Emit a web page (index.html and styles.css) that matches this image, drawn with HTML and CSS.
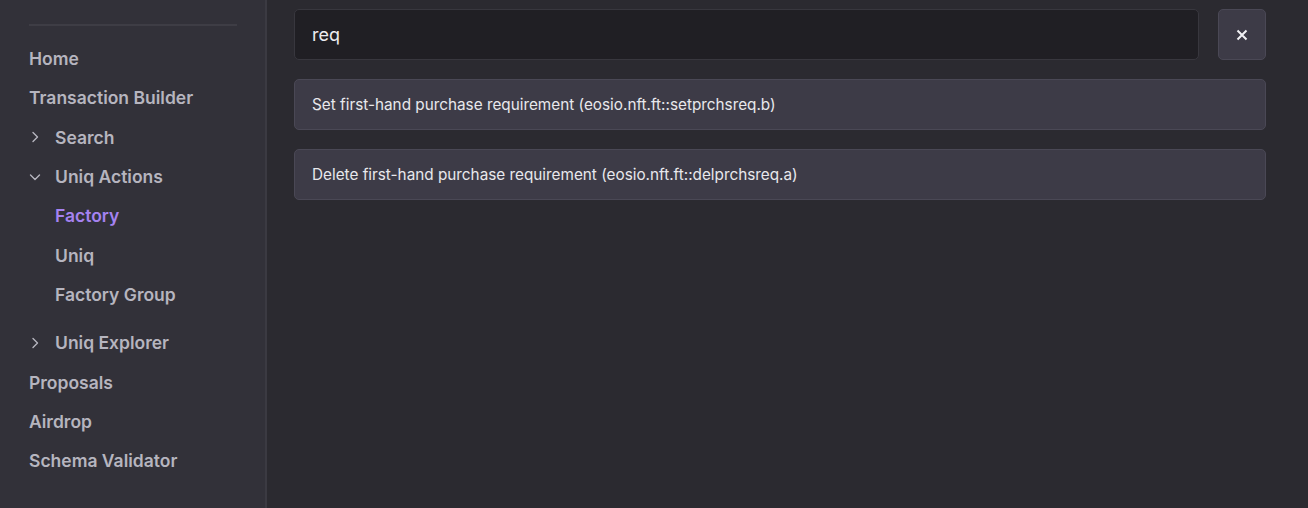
FILE: index.html
```html
<!DOCTYPE html>
<html>
<head>
<meta charset="utf-8">
<link rel="stylesheet" href="styles.css">
</head>
<body>
<div class="app">
  <aside class="sidebar">
    <div class="divider"></div>
    <nav class="nav">
      <a class="item">Home</a>
      <a class="item">Transaction Builder</a>
      <a class="item group"><svg class="chev" viewBox="0 0 12 12"><path d="M4 1.5 L8.5 6 L4 10.5"/></svg><span>Search</span></a>
      <a class="item group"><svg class="chev" viewBox="0 0 12 12"><path d="M1.5 4 L6 8.5 L10.5 4"/></svg><span>Uniq Actions</span></a>
      <div class="sub">
        <a class="item active">Factory</a>
        <a class="item">Uniq</a>
        <a class="item">Factory Group</a>
      </div>
      <a class="item group"><svg class="chev" viewBox="0 0 12 12"><path d="M4 1.5 L8.5 6 L4 10.5"/></svg><span>Uniq Explorer</span></a>
      <a class="item">Proposals</a>
      <a class="item">Airdrop</a>
      <a class="item">Schema Validator</a>
    </nav>
  </aside>
  <main class="main">
    <div class="search-row">
      <div class="search">req</div>
      <button class="clear"><svg viewBox="0 0 14 14"><path d="M2.5 2.5 L11.5 11.5 M11.5 2.5 L2.5 11.5"/></svg></button>
    </div>
    <div class="result">Set first-hand purchase requirement (eosio.nft.ft::setprchsreq.b)</div>
    <div class="result">Delete first-hand purchase requirement (eosio.nft.ft::delprchsreq.a)</div>
  </main>
</div>
</body>
</html>
```

FILE: styles.css
```css
* { box-sizing: border-box; }
html, body { margin: 0; padding: 0; }
body {
  width: 1308px;
  height: 508px;
  overflow: hidden;
  background: #2b2a30;
  font-family: Inter, "Noto Sans", sans-serif;
}
.app {
  display: flex;
  height: 508px;
}
.sidebar {
  width: 267px;
  flex: none;
  background: #323139;
  border-right: 2px solid #3b3a42;
  padding: 24px 28px 0 29px;
}
.divider {
  height: 2px;
  background: #3e3d45;
}
.nav {
  display: flex;
  flex-direction: column;
  padding-top: 13px;
}
.item {
  display: flex;
  align-items: center;
  height: 39.3px;
  color: #b6b5bf;
  font-size: 17.5px;
  font-weight: 600;
  text-decoration: none;
  white-space: nowrap;
}
.group .chev {
  width: 12px;
  height: 12px;
  margin-right: 14px;
  fill: none;
  stroke: #b6b5bf;
  stroke-width: 1.4;
  stroke-linecap: round;
  stroke-linejoin: round;
}
.sub {
  padding-left: 26px;
  margin-bottom: 9px;
}
.item.active { color: #a582f0; }
.main {
  flex: 1;
  padding: 9px 42px 0 27px;
}
.search-row {
  display: flex;
  gap: 19px;
  margin-bottom: 19px;
}
.search {
  flex: 1;
  height: 51px;
  background: #201f24;
  border: 1px solid #38373e;
  border-radius: 5px;
  color: #ececf0;
  font-size: 18px;
  display: flex;
  align-items: center;
  padding-left: 17px;
}
.clear {
  width: 48px;
  height: 51px;
  background: #3d3b47;
  border: 1px solid #4a4855;
  border-radius: 5px;
  display: flex;
  align-items: center;
  justify-content: center;
  padding: 0;
}
.clear svg {
  width: 14px;
  height: 14px;
  fill: none;
  stroke: #f0f0f4;
  stroke-width: 2;
}
.result {
  height: 51px;
  background: #3d3b47;
  border: 1px solid #4a4855;
  border-radius: 5px;
  color: #e8e8ec;
  font-size: 15.3px;
  display: flex;
  align-items: center;
  padding-left: 17px;
  margin-bottom: 19px;
}
```
